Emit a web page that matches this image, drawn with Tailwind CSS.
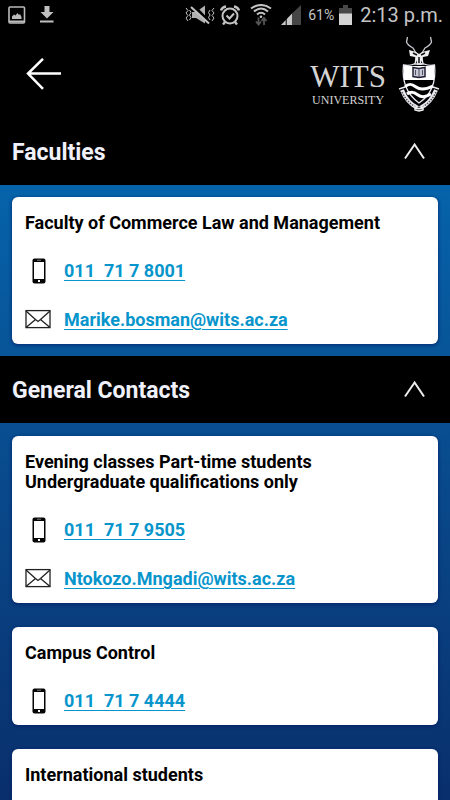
<!DOCTYPE html>
<html lang="en">
<head>
<meta charset="utf-8">
<meta name="viewport" content="width=device-width, initial-scale=1">
<title>Wits University Contacts</title>
<script src="https://cdn.jsdelivr.net/npm/@tailwindcss/browser@4"></script>
</head>
<body class="bg-black font-['Roboto',sans-serif]">
<svg class="hidden" aria-hidden="true">
  <symbol id="phone" viewBox="0 0 26 26">
    <rect x="7.500" y=".500" width="13" height="25" rx="2" fill="#050505"/>
    <rect x="9" y="4" width="10" height="17" fill="#fff"/>
    <path d="M12 2.200h4" stroke="#999" stroke-width=".8"/>
    <rect x="13" y="22" width="2" height="2" fill="#fff"/>
  </symbol>
  <symbol id="mail" viewBox="0 0 26 26">
    <g fill="none" stroke="#222" stroke-width="1.300">
      <rect x="1" y="3.600" width="24" height="17"/>
      <path d="M1 4l9.500 8.500 2.500 1.900 2.500-1.900L25 4M1 20.500l9.500-8M25 20.500l-9.500-8"/>
    </g>
  </symbol>
  <symbol id="up" viewBox="0 0 24 20">
    <path d="M3 17.500L12.600 3.500L22 17.500" fill="none" stroke="#eee" stroke-width="2"/>
  </symbol>
</svg>
<div class="flex h-screen flex-col overflow-hidden">
  <div class="flex h-[30px] shrink-0 items-center justify-between pl-2 pr-[7px] text-[#c4c4c4]">
    <div class="flex items-center gap-[14px]">
      <svg class="size-[18px]" viewBox="0 0 18 18" fill="none">
        <rect x="1" y="1" width="15.500" height="16" rx="1" stroke="#bbb" stroke-width="1.600"/>
        <path d="M1 15.500h15.500" stroke="#bbb" stroke-width="2"/>
        <path d="M4 13v-2.500l2-2 1.500 1 2-2.500 1.500 2 1-1 1.500 3v2z" fill="#bbb"/>
      </svg>
      <svg class="h-[18px] w-[14px]" viewBox="0 0 14 18" fill="#c0c0c0"><path d="M4.500 0h5v6H13.500L7 12.500.500 6h4zM0 14.500h13.500v2H0z"/></svg>
    </div>
    <div class="flex items-center">
      <svg class="h-[22px] w-[30px]" viewBox="0 0 30 22" fill="none" stroke="#c4c4c4">
        <path d="M7 8h4l9-6.500v18L11 14H7z" fill="#b0b0b0" stroke="none"/>
        <path d="M8 1.500L26 20" stroke="#000" stroke-width="3.500"/>
        <path d="M6 3L24 19.500" stroke-width="2"/>
        <path d="M1 4l2 2.500L1 9l2 2.500L1 14l2 3M4.500 6L6 8.500 4.500 11 6 13.500 4.500 16M29 4l-2 2.500L29 9l-2 2.500 2 2.500-2 3M25 6l-1.500 2.500L25 11l-1.500 2.500L25 16" stroke-width="1"/>
      </svg>
      <svg class="ml-[5px] h-[20px] w-[20px]" viewBox="0 0 20 20" fill="none" stroke="#c4c4c4" stroke-width="2">
        <circle cx="10" cy="11" r="7.500"/><path d="M6.500 10.500l3 3 4.500-5" /><path d="M1 5.500Q2 2 6 1.500M19 5.500Q18 2 14 1.500M5 17l-2 2.500M15 17l2 2.500" stroke-width="2.400"/>
      </svg>
      <svg class="ml-[10px] h-[22px] w-[22px]" viewBox="0 0 22 22" fill="none" stroke="#c4c4c4" stroke-width="2">
        <path d="M1 4.500Q11-2.500 21 4.500M4 7.500Q11 1.500 18 7.500M7 10.500Q11 7 15 10.500"/><circle cx="11" cy="12.800" r="1.300" fill="#c4c4c4" stroke="none"/>
        <path d="M8.500 13.500v7M6 17.500l2.500 3 2.500-3M14 21v-6.500M11.500 17l2.500-3 2.500 3" stroke="#555" stroke-width="1.800"/>
      </svg>
      <svg class="ml-[9px] h-[20px] w-[20px]" viewBox="0 0 20 20"><path d="M0 20L11 8.500V20z" fill="#c8c8c8"/><path d="M11 8.500L20 0v20h-9z" fill="#454545"/><path d="M5.200 13v7" stroke="#000" stroke-width="1"/></svg>
      <span class="ml-[7px] text-[14px] leading-5">61%</span>
      <svg class="ml-[5px] h-[20px] w-[13px]" viewBox="0 0 13 20"><path d="M4 0h5v3h4v6H0V3h4z" fill="#484848"/><path d="M0 8.500h13V20H0z" fill="#d4d4d4"/></svg>
      <span class="ml-2 whitespace-nowrap text-[20px] leading-6">2:13 p.m.</span>
    </div>
  </div>
  <header class="flex h-[88px] shrink-0 items-start justify-between pl-[26px] pr-[10px]">
    <button type="button" aria-label="Back" class="mt-7">
      <svg class="h-8 w-9" viewBox="0 0 36 32" fill="none" stroke="#fff" stroke-width="2.500"><path d="M17 .800L2 15.600l15 15.200M2 15.600h33"/></svg>
    </button>
    <div class="flex gap-3 text-[#d4d4d4]">
      <div class="mt-[29px] flex flex-col items-center font-['Liberation_Serif',serif]">
        <span class="text-[31px] leading-[35px]">WITS</span>
        <span class="text-[12px] leading-3">UNIVERSITY</span>
      </div>
      <svg class="mt-1 h-[80px] w-[42px]" viewBox="0 0 42 80" fill="none" stroke="#f2f2f5" stroke-width="1.300">
        <path d="M9.500 3L8.500 8Q9.500 11 15 14L18 19M32.500 3l1 5Q32.500 11 27 14L24 19" stroke="#c8c8d0"/>
        <path d="M11 16l7 2 3 2 3-2 8-2-2 6-5 1-2 6h-4l-2-6-5-1z" fill="#eee" stroke="none"/>
        <path d="M15 19l4 2M27 19l-4 2M21 23v6" stroke="#111" stroke-width="1.500"/>
        <path d="M18 24l-1 6M24 24l1 6M19 30h5" />
        <path d="M5.500 31Q12 32 16 30H26Q31 32 36.500 31C38 45 36 59 21 69C7 59 4 45 5.500 31z" stroke="#e8e8f0"/>
        <path d="M6 32h30v14H6z" fill="#fff" stroke="none"/>
        <path d="M15 33.500l6 1 6-1v9l-6 1-6-1z" fill="#c8c8d5" stroke="#202035" stroke-width="1.500"/><path d="M21 35v8M17.500 36v5M24.500 36v5" stroke="#50506a" stroke-width="1"/>
        <path d="M7 53c4-4 7-3 11 0s9 3 17-1M9 60c4-3 7-2 11 1s8 2 13-1" stroke="#fff" stroke-width="3"/>
        <path d="M4 56Q9 69 20 74M38 56Q33 69 22 74" stroke="#e8e8ef" stroke-width="4"/>
        <path d="M4 58Q9 69 20 74M38 58Q33 69 22 74" stroke="#555" stroke-width="1.500" stroke-dasharray="1.500 1.200"/>
        <path d="M1 55l6-2M41 55l-6-2M17 73l4 2 4-2v3l-4 1-4-1z" stroke="#eee" stroke-width="1.500"/>
      </svg>
    </div>
  </header>
  <main class="flex flex-1 flex-col bg-linear-to-b from-[#0569b1] to-[#092f6c]">
    <section>
      <h2 class="bg-black text-[#f0f1fa]">
        <button type="button" aria-expanded="true" class="flex h-[67px] w-full items-center justify-between pl-3 pr-6 text-left text-[23px] font-bold leading-7">
          <span class="pt-0.5">Faculties</span>
          <svg class="mb-0.5 h-5 w-6" aria-hidden="true"><use href="#up"/></svg>
        </button>
      </h2>
      <div class="p-3">
        <article class="rounded-md bg-white px-[13px] pt-4 text-[18px] font-bold leading-5 shadow-[0_1px_3px_1px_#00186080]">
          <h3 class="mb-[13px]">Faculty of Commerce Law and Management</h3>
          <div class="flex h-[49px] items-center gap-[13px] text-[#0795cc]"><svg class="size-[26px]" aria-hidden="true"><use href="#phone"/></svg><a class="whitespace-pre underline decoration-1 underline-offset-3" href="tel:0117178001">011  71 7 8001</a></div>
          <div class="flex h-[49px] items-center gap-[13px] text-[#0795cc]"><svg class="size-[26px]" aria-hidden="true"><use href="#mail"/></svg><a class="underline decoration-1 underline-offset-3" href="mailto:Marike.bosman@wits.ac.za">Marike.bosman@wits.ac.za</a></div>
        </article>
      </div>
    </section>
    <section class="flex flex-1 flex-col">
      <h2 class="bg-black text-[#f0f1fa]">
        <button type="button" aria-expanded="true" class="flex h-[67px] w-full items-center justify-between pl-3 pr-6 text-left text-[23px] font-bold leading-7">
          <span class="pt-0.5">General Contacts</span>
          <svg class="mb-0.5 h-5 w-6" aria-hidden="true"><use href="#up"/></svg>
        </button>
      </h2>
      <div class="flex flex-1 flex-col gap-6 px-3 pt-[13px]">
        <article class="rounded-md bg-white px-[13px] pt-4 text-[18px] font-bold leading-5 shadow-[0_1px_3px_1px_#00186080]">
          <h3 class="mb-[13px]">Evening classes Part-time students<br>Undergraduate qualifications only</h3>
          <div class="flex h-[49px] items-center gap-[13px] text-[#0795cc]"><svg class="size-[26px]" aria-hidden="true"><use href="#phone"/></svg><a class="whitespace-pre underline decoration-1 underline-offset-3" href="tel:0117179505">011  71 7 9505</a></div>
          <div class="flex h-[49px] items-center gap-[13px] text-[#0795cc]"><svg class="size-[26px]" aria-hidden="true"><use href="#mail"/></svg><a class="underline decoration-1 underline-offset-3" href="mailto:Ntokozo.Mngadi@wits.ac.za">Ntokozo.Mngadi@wits.ac.za</a></div>
        </article>
        <article class="rounded-md bg-white px-[13px] pt-4 text-[18px] font-bold leading-5 shadow-[0_1px_3px_1px_#00186080]">
          <h3 class="mb-[13px]">Campus Control</h3>
          <div class="flex h-[49px] items-center gap-[13px] text-[#0795cc]"><svg class="size-[26px]" aria-hidden="true"><use href="#phone"/></svg><a class="whitespace-pre underline decoration-1 underline-offset-3" href="tel:0117174444">011  71 7 4444</a></div>
        </article>
        <article class="flex-1 rounded-t-md bg-white px-[13px] pt-4 text-[18px] font-bold leading-5 shadow-[0_1px_3px_1px_#00186080]">
          <h3>International students</h3>
        </article>
      </div>
    </section>
  </main>
</div>
</body>
</html>
